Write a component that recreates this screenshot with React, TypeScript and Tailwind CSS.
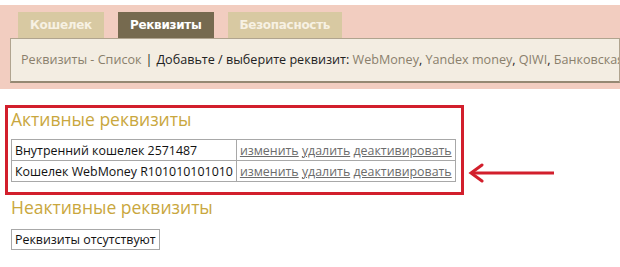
import React from "react";

const tabs = [
  { label: "Кошелек", active: false },
  { label: "Реквизиты", active: true },
  { label: "Безопасность", active: false },
];

const systems = ["WebMoney", "Yandex money", "QIWI", "Банковская карта"];

const active = ["Внутренний кошелек 2571487", "Кошелек WebMoney R101010101010"];

const Actions = () => (
  <span className="text-[#6b6b6b]">
    <a className="underline">изменить</a> <a className="underline">удалить</a>{" "}
    <a className="underline">деактивировать</a>
  </span>
);

export default function App() {
  return (
    <div className="w-[620px] h-[267px] overflow-hidden bg-white font-['Open_Sans',sans-serif] text-[12.4px]">
      <div className="mt-[5px] bg-[#f2cdc0] pt-[7px] pb-[6px]">
        <div className="flex gap-[14px] pl-[18px]">
          {tabs.map((t) => (
            <div
              key={t.label}
              className={
                "h-[26px] px-[12px] flex items-center font-bold text-[12px] font-['DejaVu_Sans',sans-serif] tracking-[-0.3px] " +
                (t.active ? "bg-[#766a4f] text-white" : "bg-[#d8c9a2] text-[#f7f1e3]")
              }
            >
              {t.label}
            </div>
          ))}
        </div>
        <div className="ml-[10px] h-[45px] flex items-center pl-[10px] bg-[#f3ede2] border border-[#b0a48f] border-b-2 border-b-[#958872] whitespace-nowrap text-[#222] text-[12.6px] overflow-hidden">
          <a className="text-[#8a7f6c]">Реквизиты - Список</a>
          <span className="mx-[4px] text-[#222]">|</span>
          <span>Добавьте / выберите реквизит:{"\u00a0"}</span>
          {systems.map((s, i) => (
            <span key={s}>
              <a className="text-[#8a7f6c]">{s}</a>
              {i < systems.length - 1 && ",\u00a0"}
            </span>
          ))}
        </div>
      </div>

      <div className="flex items-end mt-[16px]">
        <div className="ml-[5px] w-[459px] border-[3px] border-[#d21f2c] pl-[3px] pb-[10px]">
          <h2 className="text-[#c9a73e] text-[17.5px] leading-[22px]">Активные реквизиты</h2>
          <table className="mt-[9px] border-collapse text-[#111] whitespace-nowrap">
            <tbody>
              {active.map((r) => (
                <tr key={r}>
                  <td className="border border-[#a8a8a8] px-[3px] h-[21px] leading-[19px]">{r}</td>
                  <td className="border border-[#a8a8a8] px-[3px] h-[21px] leading-[19px]">
                    <Actions />
                  </td>
                </tr>
              ))}
            </tbody>
          </table>
        </div>
        <svg width="90" height="20" viewBox="0 0 90 20" className="ml-[4px] mb-[12px]">
          <path d="M3 10 H86" stroke="#d21f2c" strokeWidth="3" fill="none" />
          <path d="M14 2 L3 10 L14 18" stroke="#d21f2c" strokeWidth="3" fill="none" strokeLinecap="round" />
        </svg>
      </div>

      <div className="pl-[11px]">
        <h2 className="text-[#c9a73e] text-[17.5px] leading-[24px]">Неактивные реквизиты</h2>
        <div className="mt-[10px] inline-block border border-[#a8a8a8] px-[3px] h-[21px] leading-[19px] text-[#111]">
          Реквизиты отсутствуют
        </div>
      </div>
    </div>
  );
}
